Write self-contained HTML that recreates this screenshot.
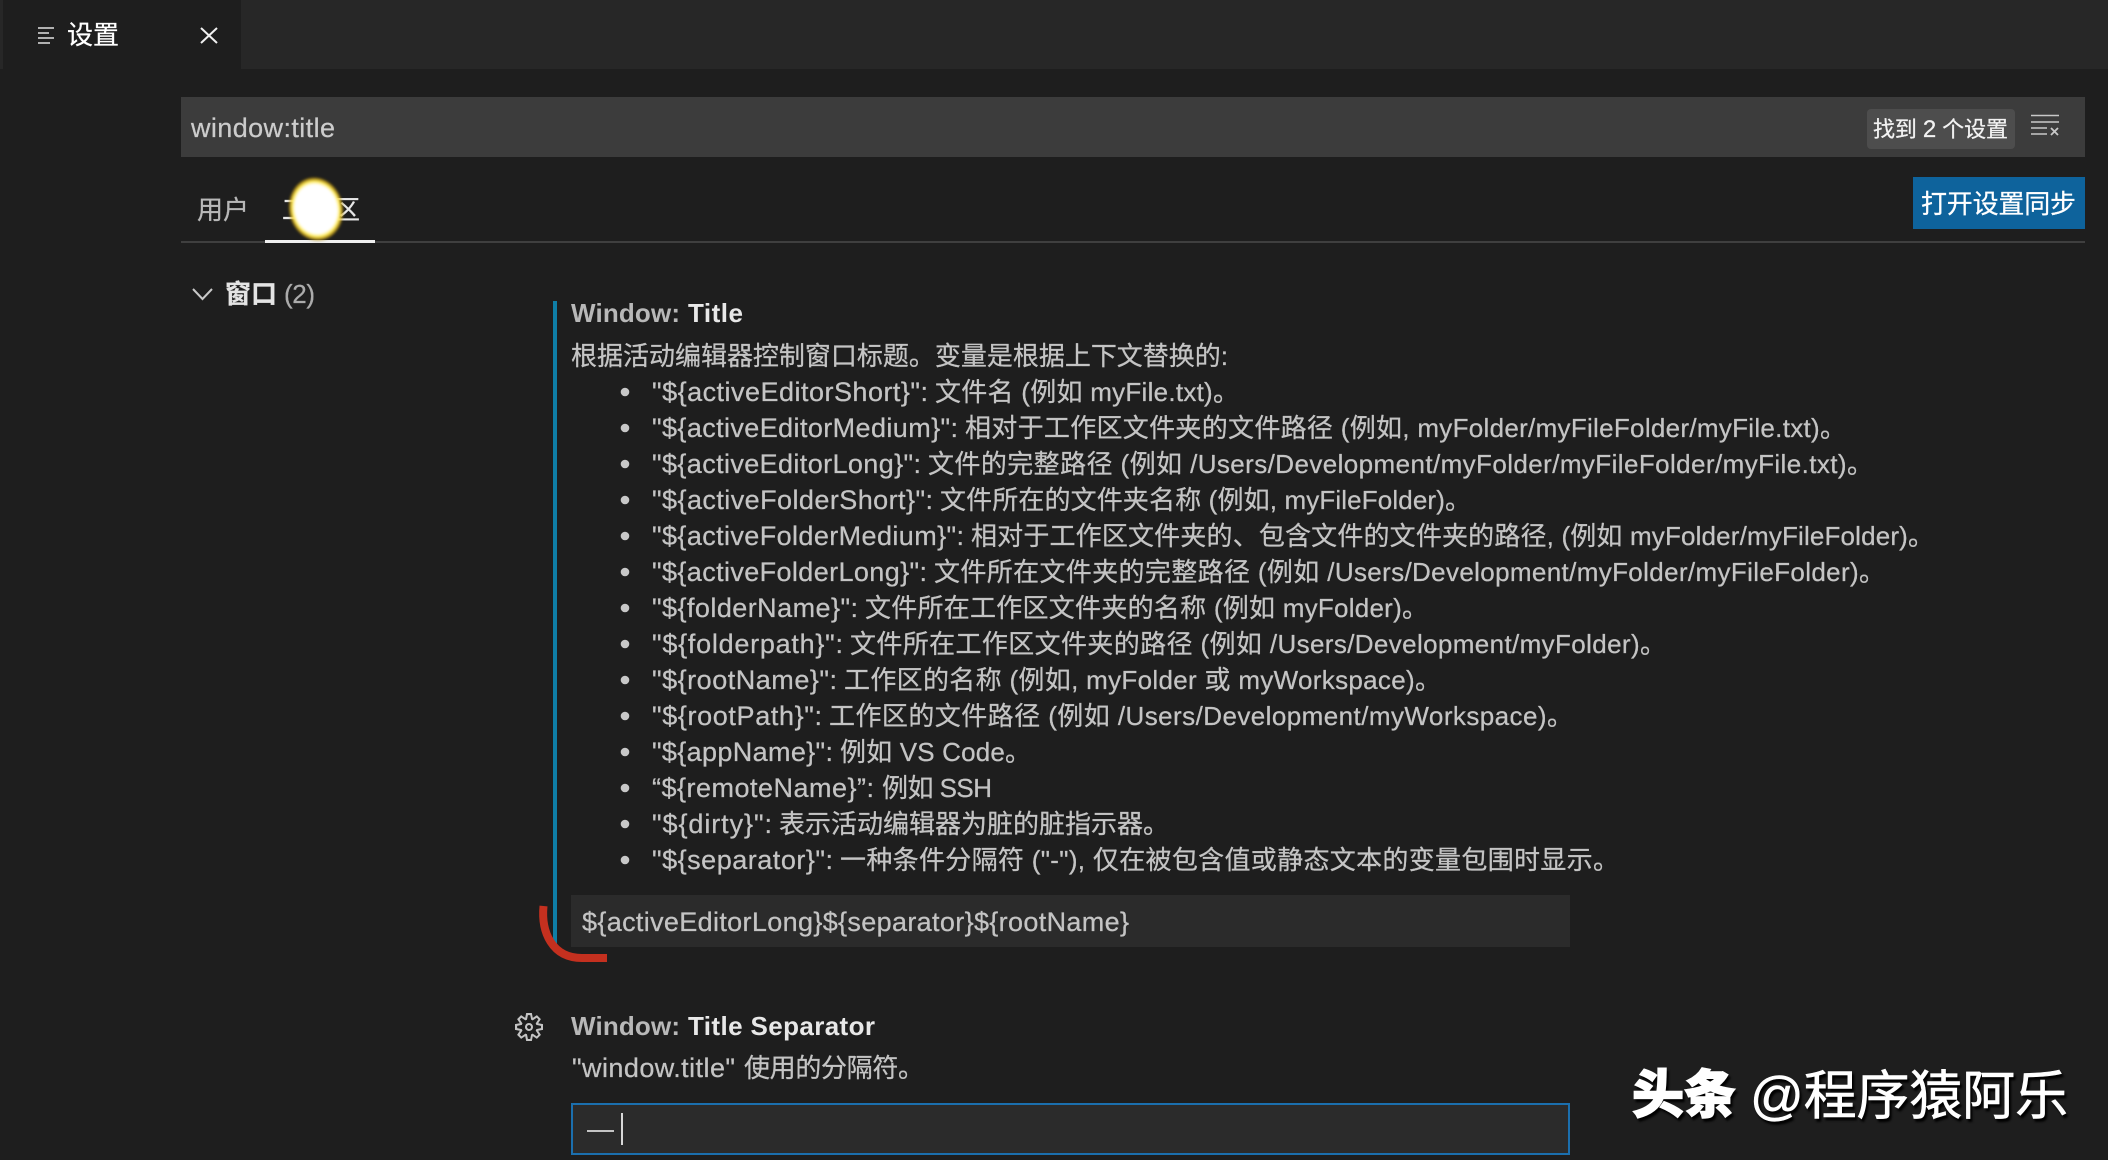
<!DOCTYPE html>
<html lang="zh-CN">
<head>
<meta charset="utf-8">
<title>设置</title>
<style>
html,body{margin:0;padding:0;width:2108px;height:1160px;overflow:hidden;background:#1e1e1e}
svg{display:block}
text{font-family:"Liberation Sans","Noto Sans CJK SC",sans-serif;font-size:26px;fill:#c4c4c4;stroke:#c4c4c4;stroke-width:.25px}
.p{font-size:27px}
.b{font-weight:700}
</style>
</head>
<body>
<svg width="2108" height="1160" viewBox="0 0 2108 1160" xmlns="http://www.w3.org/2000/svg">
<defs>
<radialGradient id="glow" cx="50%" cy="50%" r="50%">
<stop offset="0" stop-color="#fff"/>
<stop offset="0.74" stop-color="#fff"/>
<stop offset="0.84" stop-color="#ffec55"/>
<stop offset="0.93" stop-color="#e0b010" stop-opacity=".65"/>
<stop offset="1" stop-color="#1e1e1e" stop-opacity="0"/>
</radialGradient>
<filter id="soft" x="-20%" y="-20%" width="140%" height="140%"><feGaussianBlur stdDeviation="1"/></filter>
</defs>
<rect width="2108" height="1160" fill="#1e1e1e"/>
<!-- tab bar -->
<rect x="0" y="0" width="2108" height="69" fill="#272727"/>
<rect x="3" y="0" width="238" height="69" fill="#1e1e1e"/>
<path d="M38 28H54M38 33H49M38 38H54M38 43H50" fill="none" stroke="#e0e0e0" stroke-width="1.6"/>
<text x="67" y="44" style="fill:#fff;stroke:#fff">设置</text>
<path d="M201 28L217 43M217 28L201 43" stroke="#f0f0f0" stroke-width="2" fill="none"/>

<!-- search -->
<rect x="181" y="97" width="1904" height="60" fill="#3c3c3c"/>
<text x="191" y="137" textLength="144" style="font-size:27px;fill:#cccccc;stroke:#cccccc">window:title</text>
<rect x="1867" y="109" width="148" height="40" rx="4" fill="#4d4d4d"/>
<text x="1873" y="137" textLength="135" style="font-size:22px;fill:#f2f2f2;stroke:#f2f2f2">找到 <tspan style="font-size:24px">2</tspan> 个设置</text>
<path d="M2031 115.500H2059M2031 122H2059M2031 128H2047M2031 134H2047" stroke="#c8c8c8" stroke-width="1.600" fill="none"/>
<path d="M2051 128L2058 135M2058 128L2051 135" stroke="#c8c8c8" stroke-width="1.800" fill="none"/>

<!-- tabs -->
<rect x="181" y="241" width="1904" height="2" fill="#3f3f3f"/>
<text x="197" y="219" style="fill:#b8b8b8;stroke:#b8b8b8">用户</text>
<text x="282" y="219" style="fill:#e8e8e8;stroke:#e8e8e8">工作区</text>
<rect x="265" y="240" width="110" height="3" fill="#f0f0f0"/>
<ellipse cx="316" cy="209" rx="28" ry="33" fill="url(#glow)" filter="url(#soft)" transform="rotate(-12 316 209)"/>

<!-- sync button -->
<rect x="1913" y="177" width="172" height="52" fill="#0e639c"/>
<text x="1921" y="213" textLength="155" style="fill:#fff;stroke:#fff">打开设置同步</text>

<!-- group header -->
<path d="M193 289L202.500 299L212 289" stroke="#c8c8c8" stroke-width="2" fill="none"/>
<text x="225" y="303" class="b" style="fill:#e4e4e4;stroke:#e4e4e4">窗口</text>
<text x="284" y="303" textLength="31" style="fill:#ababab;stroke:#ababab">(2)</text>

<!-- setting 1 -->
<rect x="553" y="301" width="4" height="643" fill="#0f7ea6"/>
<text x="571" y="322" class="b" style="fill:#b8b8b8;stroke:none" textLength="109">Window:</text>
<text x="688" y="322" class="b" style="fill:#e8e8e8;stroke:none" textLength="55">Title</text>
<text x="571" y="365" textLength="657">根据活动编辑器控制窗口标题。变量是根据上下文替换的:</text>

<g fill="#c8c8c8">
<circle cx="625" cy="392" r="4.300"/><circle cx="625" cy="428" r="4.300"/><circle cx="625" cy="464" r="4.300"/><circle cx="625" cy="500" r="4.300"/><circle cx="625" cy="536" r="4.300"/><circle cx="625" cy="572" r="4.300"/><circle cx="625" cy="608" r="4.300"/><circle cx="625" cy="644" r="4.300"/><circle cx="625" cy="680" r="4.300"/><circle cx="625" cy="716" r="4.300"/><circle cx="625" cy="752" r="4.300"/><circle cx="625" cy="788" r="4.300"/><circle cx="625" cy="824" r="4.300"/><circle cx="625" cy="860" r="4.300"/>
</g>
<text class="p" x="652" y="401" textLength="276">"${activeEditorShort}":</text><text x="935" y="401" textLength="304">文件名 (例如 myFile.txt)。</text>
<text class="p" x="652" y="437" textLength="306">"${activeEditorMedium}":</text><text x="965" y="437" textLength="881">相对于工作区文件夹的文件路径 (例如, myFolder/myFileFolder/myFile.txt)。</text>
<text class="p" x="652" y="473" textLength="269">"${activeEditorLong}":</text><text x="928" y="473" textLength="945">文件的完整路径 (例如 /Users/Development/myFolder/myFileFolder/myFile.txt)。</text>
<text class="p" x="652" y="509" textLength="281">"${activeFolderShort}":</text><text x="940" y="509" textLength="531">文件所在的文件夹名称 (例如, myFileFolder)。</text>
<text class="p" x="652" y="545" textLength="312">"${activeFolderMedium}":</text><text x="971" y="545" textLength="963">相对于工作区文件夹的、包含文件的文件夹的路径, (例如 myFolder/myFileFolder)。</text>
<text class="p" x="652" y="581" textLength="275">"${activeFolderLong}":</text><text x="934" y="581" textLength="951">文件所在文件夹的完整路径 (例如 /Users/Development/myFolder/myFileFolder)。</text>
<text class="p" x="652" y="617" textLength="206">"${folderName}":</text><text x="865" y="617" textLength="563">文件所在工作区文件夹的名称 (例如 myFolder)。</text>
<text class="p" x="652" y="653" textLength="191">"${folderpath}":</text><text x="850" y="653" textLength="816">文件所在工作区文件夹的路径 (例如 /Users/Development/myFolder)。</text>
<text class="p" x="652" y="689" textLength="185">"${rootName}":</text><text x="844" y="689" textLength="597">工作区的名称 (例如, myFolder 或 myWorkspace)。</text>
<text class="p" x="652" y="725" textLength="170">"${rootPath}":</text><text x="829" y="725" textLength="744">工作区的文件路径 (例如 /Users/Development/myWorkspace)。</text>
<text class="p" x="652" y="761" textLength="181">"${appName}":</text><text x="840" y="761" textLength="191">例如 VS Code。</text>
<text class="p" x="652" y="797" textLength="222">“${remoteName}”:</text><text x="882" y="797" textLength="110">例如 SSH</text>
<text class="p" x="652" y="833" textLength="120">"${dirty}":</text><text x="779" y="833" textLength="390">表示活动编辑器为脏的脏指示器。</text>
<text class="p" x="652" y="869" textLength="181">"${separator}":</text><text x="840" y="869" textLength="779">一种条件分隔符 ("-"), 仅在被包含值或静态文本的变量包围时显示。</text>

<rect x="571" y="895" width="999" height="52" fill="#2b2b2b"/>
<text x="582" y="931" textLength="547" class="p">${activeEditorLong}${separator}${rootName}</text>
<path d="M543.500 906C541 932 552 958 582 958H607" stroke="#c4301f" stroke-width="8" fill="none"/>

<!-- setting 2 -->
<path transform="translate(515 1013) scale(1.167)" fill="#c4c4c4" d="M19.850 8.750l4.150.830v4.840l-4.150.830 2.350 3.520-3.430 3.430-3.520-2.350-.830 4.150H9.580l-.830-4.150-3.520 2.350-3.430-3.430 2.350-3.520L0 14.420V9.580l4.150-.830L1.800 5.230 5.230 1.800l3.520 2.350L9.580 0h4.840l.830 4.150 3.520-2.350 3.430 3.430-2.350 3.520zm-1.570 5.070l4-.810v-2l-4-.810-.540-1.300 2.290-3.430-1.430-1.430-3.430 2.290-1.300-.540-.810-4h-2l-.810 4-1.300.540-3.430-2.290-1.430 1.430L6.380 8.900l-.540 1.300-4 .810v2l4 .810.540 1.300-2.290 3.430 1.430 1.430 3.430-2.290 1.300.540.810 4h2l.810-4 1.300-.540 3.430 2.290 1.430-1.430-2.290-3.430.540-1.300zm-8.186-4.672A3.430 3.430 0 0 1 12 8.570 3.440 3.440 0 0 1 15.430 12a3.430 3.430 0 1 1-5.336-2.852zm.956 4.274c.281.188.612.288.950.288A1.700 1.700 0 0 0 13.710 12a1.710 1.710 0 1 0-2.660 1.422z"/>
<text x="571" y="1035" class="b" style="fill:#b8b8b8;stroke:none" textLength="109">Window:</text>
<text x="688" y="1035" class="b" style="fill:#e8e8e8;stroke:none" textLength="187">Title Separator</text>
<text class="p" x="572" y="1077" textLength="163">"window.title"</text><text x="744" y="1077" textLength="180">使用的分隔符。</text>
<rect x="572" y="1104" width="997" height="50" fill="#2b2b2b" stroke="#1b6fae" stroke-width="2"/>
<rect x="587" y="1130" width="27" height="2" fill="#c4c4c4"/>
<rect x="621" y="1113" width="2" height="32" fill="#d8d8d8"/>

<!-- watermark -->
<g style="filter:drop-shadow(2px 3px 1px #000)">
<text x="1632" y="1113" class="b" style="font-size:52px;font-weight:900;fill:#fff;stroke:#fff;stroke-width:1.4px;font-family:'Noto Sans CJK SC',sans-serif">头条</text>
<text x="1750" y="1114" textLength="318" style="font-size:53px;fill:#fff;stroke:#fff;stroke-width:.6px">@程序猿阿乐</text>
</g>
</svg>
</body>
</html>
